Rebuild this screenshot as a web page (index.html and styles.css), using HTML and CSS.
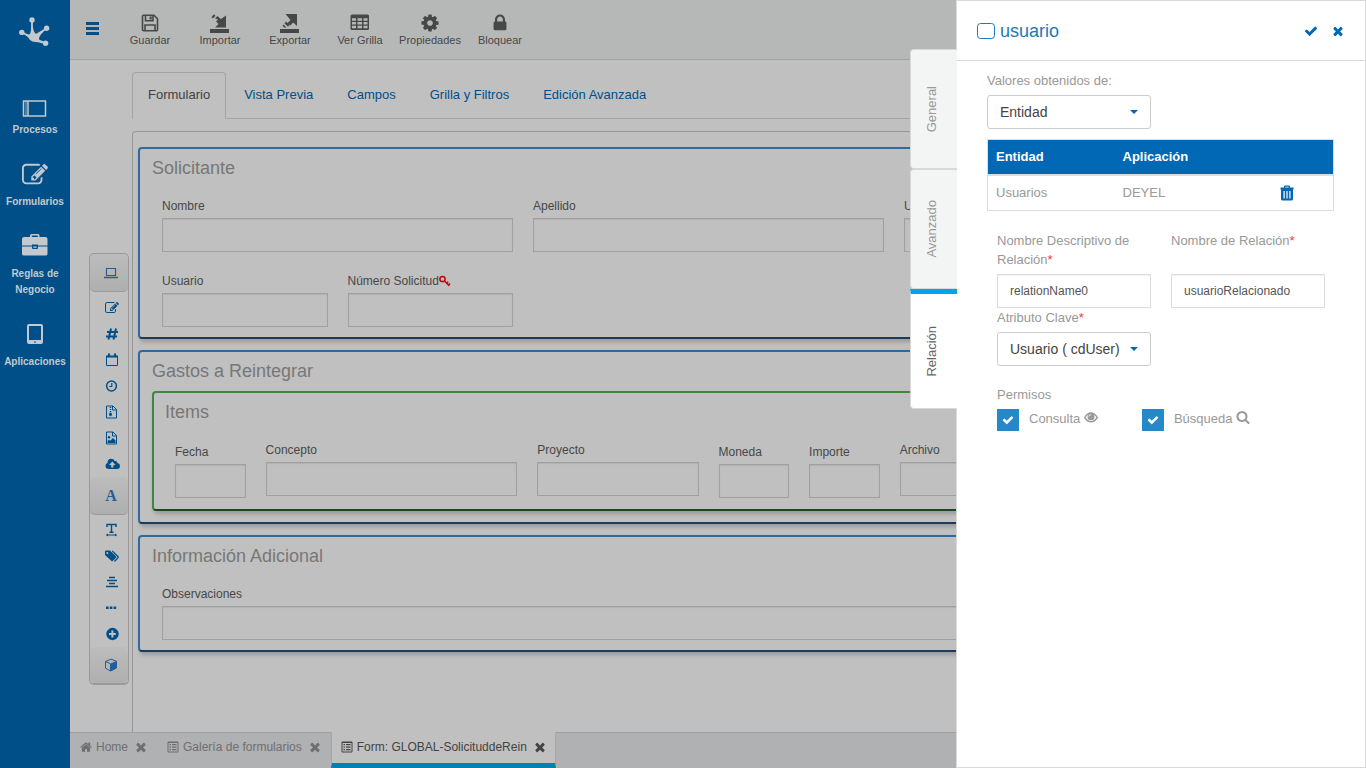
FILE: index.html
```html
<!DOCTYPE html>
<html lang="es">
<head>
<meta charset="utf-8">
<meta name="viewport" content="width=device-width, initial-scale=1">
<title>Form: GLOBAL-SolicituddeRein</title>
<link rel="stylesheet" href="styles.css">
</head>
<body>
<svg class="symbols" aria-hidden="true">
  <symbol id="i-times" viewBox="0 0 1792 1792"><path d="M1490 1322q0 40-28 68l-136 136q-28 28-68 28t-68-28l-294-294-294 294q-28 28-68 28t-68-28l-136-136q-28-28-28-68t28-68l294-294-294-294q-28-28-28-68t28-68l136-136q28-28 68-28t68 28l294 294 294-294q28-28 68-28t68 28l136 136q28 28 28 68t-28 68l-294 294 294 294q28 28 28 68z"/></symbol>
  <symbol id="i-check" viewBox="0 0 1792 1792"><path d="M1671 566q0 40-28 68l-724 724-136 136q-28 28-68 28t-68-28l-136-136-362-362q-28-28-28-68t28-68l136-136q28-28 68-28t68 28l294 295 656-657q28-28 68-28t68 28l136 136q28 28 28 68z"/></symbol>
  <symbol id="i-edit" viewBox="0 0 1792 1792"><path d="M888 1184l116-116-152-152-116 116v56h96v96h56zm440-720q-16-16-33 1l-350 350q-17 17-1 33t33-1l350-350q17-17 1-33zm80 594v190q0 119-84.5 203.5t-203.5 84.5h-832q-119 0-203.5-84.5t-84.5-203.5v-832q0-119 84.5-203.5t203.5-84.5h832q63 0 117 25 15 7 18 23 3 17-9 29l-49 49q-14 14-32 8-23-6-45-6h-832q-66 0-113 47t-47 113v832q0 66 47 113t113 47h832q66 0 113-47t47-113v-126q0-13 9-22l64-64q15-15 35-7t20 29zm-96-738l288 288-672 672h-288v-288zm444 132l-92 92-288-288 92-92q28-28 68-28t68 28l152 152q28 28 28 68t-28 68z"/></symbol>
  <symbol id="i-list" viewBox="0 0 12 12"><path fill-rule="evenodd" d="M1.500.5h9a1 1 0 0 1 1 1v9a1 1 0 0 1-1 1h-9a1 1 0 0 1-1-1v-9a1 1 0 0 1 1-1zM1.500 2v8.500h9V2z"/><path d="M2.500 3H4v1.200H2.500zM5 3h4.500v1.200H5zM2.500 5.500H4v1.200H2.500zM5 5.500h4.500v1.200H5zM2.500 8H4v1.200H2.500zM5 8h4.500v1.200H5z"/></symbol>
</svg>

<div class="app">
  <nav class="sidebar" aria-label="Principal">
    <a class="logo" href="#" aria-label="Inicio">
      <svg width="34" height="34" viewBox="0 0 34 34"><g stroke="currentColor" stroke-linecap="round" fill="none" stroke-width="1.800"><path d="M14 6v11M4 18.500l8 4M18 21l10.500-6.500M17 25l10.500 4"/></g><g fill="currentColor"><circle cx="14" cy="6" r="2.700"/><circle cx="3.800" cy="18.400" r="2.700"/><circle cx="28.600" cy="14.200" r="2.700"/><circle cx="27.600" cy="29.300" r="2.700"/><path d="M13.200 12h1.600q.2 5 3.200 8 3 0 7-3.800l.8 1.200q-5 4.600-4.800 7.800 1 1.800 4 2.900l-.5 1.400q-3-1.500-6.500-1.500-3.500.3-6-2-2-3.500-5-5.300l.6-1.200q3 1.500 4.400.5 1.200-2.500 1.200-8z"/></g></svg>
    </a>
    <ul class="sidebar-menu">
      <li><a href="#"><svg width="30" height="30" viewBox="0 1 30 30" fill="none" stroke="currentColor"><path d="M3.500 14h22v15h-22zM8 14v15" stroke-width="1.500"/><path d="M6 14v15" stroke-width=".8"/></svg>Procesos</a></li>
      <li><a href="#"><svg width="26" height="30"><use href="#i-edit"/></svg>Formularios</a></li>
      <li><a href="#"><svg width="30" height="30" viewBox="0 2 30 30" fill="currentColor"><path fill-rule="evenodd" d="M10 7V5.500Q10 4 11.500 4h6.500q1.500 0 1.500 1.500V7h6q2 0 2 2v6.500H18v-1h-6v1H2V9q0-2 2-2zm1.800 0h6V5.500h-6zM2 16.500h10V18q0 1 1 1h4q1 0 1-1v-1.500h9.500V24q0 1.500-2 1.500H4q-2 0-2-1.500zm11.300 0h3.400v1.300h-3.400z"/></svg>Reglas de<br>Negocio</a></li>
      <li><a href="#"><svg width="30" height="30" viewBox="0 1 30 30" fill="currentColor"><path fill-rule="evenodd" d="M9 5h12q2 0 2 2v16q0 2-2 2H9q-2 0-2-2V7q0-2 2-2zm0 2v14h12V7zm5.200 15.500v1.200h1.600v-1.200z"/></svg>Aplicaciones</a></li>
    </ul>
  </nav>

  <div class="main">
    <header class="toolbar">
      <button class="burger" type="button" aria-label="Menú"><svg width="14" height="14" viewBox="0 0 14 14" fill="currentColor"><path d="M0 0h13v3H0zM0 5h13v3H0zM0 10h13v3H0z"/></svg></button>
      <button type="button"><svg width="20" height="20" viewBox="0 0 20 20" fill="none" stroke="currentColor" stroke-width="1.600"><path d="M2.500 3.300q0-1 1-1H14l3.500 3.500v11q0 1-1 1h-13q-1 0-1-1z"/><path d="M5 17.500V12h10v5.500M5.500 2.500v5.200h7.500V2.500"/><path d="M9.500 3.500h2.200v3H9.500z" fill="currentColor" stroke="none"/></svg>Guardar</button>
      <button type="button"><svg width="20" height="20" viewBox="0 0 20 20" fill="currentColor"><path d="M0 16h19v5H0zM1.500 4L4 1.200l1.500 1.500L3 5.500zM5 5.500L7.500 3 16 11V2.500V14.500H5L8.500 11 6 8.500 8 6.500z"/><path d="M9.500 7L16 2.500v9z"/></svg>Importar</button>
      <button type="button"><svg width="20" height="20" viewBox="0 0 20 20" fill="currentColor"><path d="M0 16h19v5H0zM5.500 1H17v12l-3.800-3.500-3 3L7.500 10l3-3zM6 8.500l3.500 3.500-1.500 1.700-3.500-3.200zM3.500 11.500l2.500 2.500-1 1-2.500-2z"/></svg>Exportar</button>
      <button type="button"><svg width="20" height="20" viewBox="0 0 20 20"><path fill="currentColor" fill-rule="evenodd" d="M2 1.500h15.500Q19 1.500 19 3v12.500q0 1.500-1.500 1.500H2Q.5 17 .5 15.500V3Q.5 1.500 2 1.500zM2 5.200v2.500h4V5.200zm5.500 0v2.500H12V5.200zm6 0v2.500h4V5.200zM2 9v2.500h4V9zm5.500 0v2.500H12V9zm6 0v2.500h4V9zM2 12.800v2.500h4v-2.500zm5.500 0v2.500H12v-2.500zm6 0v2.500h4v-2.500z"/></svg>Ver Grilla</button>
      <button type="button"><svg width="20" height="20" viewBox="0 0 1792 1792" fill="currentColor"><path d="M1152 896q0-106-75-181t-181-75-181 75-75 181 75 181 181 75 181-75 75-181zm512-109v222q0 12-8 23t-20 13l-185 28q-19 54-39 91 35 50 107 138 10 12 10 25t-9 23q-27 37-99 108t-94 71q-12 0-26-9l-138-108q-44 23-91 38-16 136-29 186-7 28-36 28h-222q-14 0-24.500-8.500t-11.500-21.500l-28-184q-49-16-90-37l-141 107q-10 9-25 9-14 0-25-11-126-114-165-168-7-10-7-23 0-12 8-23 15-21 51-66.500t54-70.500q-27-50-41-99l-183-27q-13-2-21-12.500t-8-23.500v-222q0-12 8-23t19-13l186-28q14-46 39-92-40-57-107-138-10-12-10-24 0-10 9-23 26-36 98.500-107.500t94.500-71.500q13 0 26 10l138 107q44-23 91-38 16-136 29-186 7-28 36-28h222q14 0 24.500 8.500t11.500 21.500l28 184q49 16 90 37l142-107q9-9 24-9 13 0 25 10 129 119 165 170 7 8 7 22 0 12-8 23-15 21-51 66.500t-54 70.500q26 50 41 98l183 28q13 2 21 12.500t8 23.500z"/></svg>Propiedades</button>
      <button type="button"><svg width="20" height="20" viewBox="0 0 1792 1792" fill="currentColor"><path d="M640 768h512v-192q0-106-75-181t-181-75-181 75-75 181v192zm832 96v576q0 40-28 68t-68 28h-960q-40 0-68-28t-28-68v-576q0-40 28-68t68-28h32v-192q0-184 132-316t316-132 316 132 132 316v192h32q40 0 68 28t28 68z"/></svg>Bloquear</button>
    </header>

    <div class="content">
      <aside class="rail" aria-label="Controles">
        <div class="rail-box">
          <button class="rail-head" type="button" aria-label="Controles"><svg width="16" height="12" viewBox="0 0 16 12" fill="none" stroke="currentColor"><path d="M3.500 1.500h9v7h-9z" stroke-width="1.200"/><path d="M1 10.500h14" stroke-width="1.400"/></svg></button>
          <ul class="rail-list">
            <li><button type="button" aria-label="Texto"><svg width="14" height="14"><use href="#i-edit"/></svg></button></li>
            <li><button type="button" aria-label="Número"><svg width="14" height="14" viewBox="0 0 14 14" fill="none" stroke="currentColor" stroke-width="2"><path d="M6 1.500L3.500 12.500M11 1.500L8.500 12.500M2 5h11M1 9.500h11"/></svg></button></li>
            <li><button type="button" aria-label="Fecha"><svg width="14" height="14" viewBox="0 0 14 14"><path d="M1.500 3.500h11v9h-11z" fill="none" stroke="currentColor"/><path d="M1 2.500h12v2H1zM3 .5h2v3H3zM9 .5h2v3H9z" fill="currentColor"/></svg></button></li>
            <li><button type="button" aria-label="Hora"><svg width="14" height="14" viewBox="0 0 14 14" fill="none" stroke="currentColor"><circle cx="6.500" cy="7" r="4.900" stroke-width="1.500"/><path d="M6.800 4v3.500H4.200" stroke-width="1.200"/></svg></button></li>
            <li><button type="button" aria-label="Archivo"><svg width="14" height="14" viewBox="0 0 14 14" fill="none" stroke="currentColor"><path d="M1.500 1h6.500l3.500 3.500v8.500h-10zM7.500 1v4h4"/><path d="M5.500 2v6" stroke-width="1.400" stroke-dasharray="1 1"/><ellipse cx="5.500" cy="9.300" rx="1.400" ry="1.900" fill="currentColor" stroke="none"/></svg></button></li>
            <li><button type="button" aria-label="Imagen"><svg width="14" height="14" viewBox="0 0 14 14" fill="none" stroke="currentColor"><path d="M1.500 1h6.500l3.500 3.500v8.500h-10zM7.500 1v4h4"/><path d="M2.500 12V10L4 8.800l1.200 1L8 7l2.500 2.500V12z" fill="currentColor" stroke="none"/><circle cx="4" cy="6.300" r="1.200" fill="currentColor" stroke="none"/></svg></button></li>
            <li><button type="button" aria-label="Subir"><svg width="15" height="14" viewBox="0 0 15 14"><path fill="currentColor" fill-rule="evenodd" d="M4 12q-3.500 0-3.500-3Q.5 6.700 2.500 6 2.300 2 6.200 1.800q2.500 0 3.600 2.300 2.200-.5 2.700 2Q15 6.700 15 9q0 3-3 3zM7.300 4.500L4 8h2.200v2.500h2.200V8h2.200z"/></svg></button></li>
          </ul>
          <button class="rail-head rail-letter" type="button">A</button>
          <ul class="rail-list">
            <li><button type="button" aria-label="Rótulo"><svg width="14" height="14" viewBox="0 0 14 14" fill="none" stroke="currentColor"><path d="M2 4V1.500h9V4M6.500 1.500v7.500M4.500 9.300h4" stroke-width="1.400"/><path d="M1.500 12h10" stroke-width="1.200"/><path d="M3 10.500L1 12l2 1.500zM10 10.500l2 1.500-2 1.500z" fill="currentColor" stroke="none"/></svg></button></li>
            <li><button type="button" aria-label="Etiquetas"><svg width="16" height="14" viewBox="0 0 16 14"><path fill="currentColor" fill-rule="evenodd" d="M1 2.500Q1 1.500 2 1.500h4L12 7.500q.6.600 0 1.200L8.700 12q-.6.600-1.200 0L1 6zM3.300 3a1 1 0 1 0 .1 2 1 1 0 0 0-.1-2z"/><path d="M8.300 2l5.800 5.800q.4.400 0 .8L10.500 12.500" fill="none" stroke="currentColor" stroke-width="1.300"/></svg></button></li>
            <li><button type="button" aria-label="Separador"><svg width="14" height="14" viewBox="0 0 14 14" fill="none" stroke="currentColor" stroke-width="1.500"><path d="M4 2.500h6M2 5.500h10M4 8.500h6M1 11.500h12"/></svg></button></li>
            <li><button type="button" aria-label="Espacio"><svg width="14" height="14" viewBox="0 0 14 14" fill="currentColor"><path d="M1 5.500h2.600V8H1zM4.800 5.500h2.600V8H4.800zM8.600 5.500h2.600V8H8.600z"/></svg></button></li>
            <li><button type="button" aria-label="Agregar"><svg width="14" height="14" viewBox="0 0 14 14" fill="currentColor"><path fill-rule="evenodd" d="M7.500.8a6.200 6.200 0 1 0 .01 0zM6.400 3.500h2v2.400h2.400v2H8.400v2.600h-2V7.900H4v-2h2.400z"/></svg></button></li>
          </ul>
          <button class="rail-head" type="button" aria-label="Objetos"><svg width="16" height="14" viewBox="0 0 14 14" fill="none" stroke="currentColor"><path d="M1.500 3.500L7 1.200l5.500 2v6.300L6.500 13l-5-2.800z"/><path d="M6.500 6l6-2.500v6.500l-6 3z" fill="currentColor"/><path d="M1.500 3.500l5 2.300"/></svg></button>
        </div>
      </aside>

      <main class="work">
        <nav class="tabs" aria-label="Vistas">
          <a class="tab tab--active" href="#">Formulario</a>
          <a class="tab" href="#">Vista Previa</a>
          <a class="tab" href="#">Campos</a>
          <a class="tab" href="#">Grilla y Filtros</a>
          <a class="tab" href="#">Edición Avanzada</a>
        </nav>

        <form class="canvas">
          <section class="group">
            <h2>Solicitante</h2>
            <div class="fields fields--six">
              <div class="field span-2"><label for="nombre">Nombre</label><input id="nombre" type="text"></div>
              <div class="field span-2"><label for="apellido">Apellido</label><input id="apellido" type="text"></div>
              <div class="field span-2"><label for="unidad">Unidad</label><input id="unidad" type="text"></div>
              <div class="field"><label for="usuario">Usuario</label><input id="usuario" type="text"></div>
              <div class="field"><label for="numero">Número Solicitud<svg class="key" width="12" height="12" viewBox="0 0 12 12" fill="none" stroke="currentColor" stroke-width="1.500"><circle cx="3.500" cy="4" r="2.600"/><path d="M5.500 6l5 5M7.700 8.200l1.500-1.500M9.500 10l1.500-1.500"/></svg></label><input id="numero" type="text"></div>
            </div>
          </section>

          <section class="group group--outer">
            <h2>Gastos a Reintegrar</h2>
            <section class="group group--items">
              <h2>Items</h2>
              <div class="fields fields--twelve">
                <div class="field field--short"><label for="fecha">Fecha</label><input id="fecha" type="text"></div>
                <div class="field span-3"><label for="concepto">Concepto</label><input id="concepto" type="text"></div>
                <div class="field span-2"><label for="proyecto">Proyecto</label><input id="proyecto" type="text"></div>
                <div class="field field--short"><label for="moneda">Moneda</label><input id="moneda" type="text"></div>
                <div class="field field--short"><label for="importe">Importe</label><input id="importe" type="text"></div>
                <div class="field span-4"><label for="archivo">Archivo</label><input id="archivo" type="text"></div>
              </div>
            </section>
          </section>

          <section class="group">
            <h2>Información Adicional</h2>
            <div class="fields">
              <div class="field"><label for="obs">Observaciones</label><input id="obs" type="text"></div>
            </div>
          </section>
        </form>
      </main>
    </div>

    <footer class="taskbar">
      <div class="task"><a href="#"><svg width="12" height="12" viewBox="60 190 1670 1400" fill="currentColor"><path d="M1472 992v480q0 26-19 45t-45 19h-384v-384h-256v384h-384q-26 0-45-19t-19-45v-480l576-477 576 477zm223-69l-62 74q-8 9-21 11h-3q-13 0-21-7l-692-577-692 577q-12 8-24 7-13-2-21-11l-62-74q-8-10-7-23.500t11-21.500l719-599q32-26 76-26t76 26l244 204v-195q0-14 9-23t23-9h192q14 0 23 9t9 23v408l219 182q10 8 11 21.500t-7 23.500z"/></svg>Home</a><button type="button" aria-label="Cerrar Home"><svg width="14" height="14"><use href="#i-times"/></svg></button></div>
      <div class="task"><a href="#"><svg width="12" height="12"><use href="#i-list"/></svg>Galería de formularios</a><button type="button" aria-label="Cerrar Galería de formularios"><svg width="14" height="14"><use href="#i-times"/></svg></button></div>
      <div class="task task--active"><a href="#"><svg width="12" height="12"><use href="#i-list"/></svg>Form: GLOBAL-SolicituddeRein</a><button type="button" aria-label="Cerrar Form"><svg width="14" height="14"><use href="#i-times"/></svg></button></div>
    </footer>
  </div>

  <aside class="drawer" aria-label="Propiedades de usuario">
    <nav class="side-tabs" aria-label="Secciones">
      <a href="#"><span>General</span></a>
      <a href="#"><span>Avanzado</span></a>
      <a class="is-active" href="#"><span>Relación</span></a>
    </nav>
    <div class="drawer-head">
      <h1><svg width="18" height="16" viewBox="0 0 18 16" fill="none" stroke="currentColor"><rect x=".5" y=".5" width="17" height="15" rx="3"/></svg>usuario</h1>
      <button type="button" aria-label="Aceptar"><svg width="14" height="14"><use href="#i-check"/></svg></button>
      <button type="button" aria-label="Cerrar"><svg width="14" height="14"><use href="#i-times"/></svg></button>
    </div>
    <div class="drawer-body">
      <div class="source">
        <label for="origen">Valores obtenidos de:</label>
        <span class="select"><select id="origen"><option>Entidad</option></select></span>
      </div>
      <table class="entities">
        <thead><tr><th scope="col">Entidad</th><th scope="col">Aplicación</th><th scope="col"></th></tr></thead>
        <tbody><tr><td>Usuarios</td><td>DEYEL</td><td class="actions"><button type="button" aria-label="Eliminar"><svg width="14" height="16" viewBox="0 0 14 16"><path fill="currentColor" fill-rule="evenodd" d="M4 2.500V1.500Q4 .5 5 .5h4q1 0 1 1v1h3.500v2H13V14q0 1.500-1.500 1.500h-9Q1 15.500 1 14V4.500H.5v-2zm1.300 0h3.400v-.8H5.300zM3.500 6v7.500h1.200V6zm2.900 0v7.500h1.200V6zm2.900 0v7.500h1.200V6z"/></svg></button></td></tr></tbody>
      </table>
      <div class="relation">
        <div class="prop"><label for="desc">Nombre Descriptivo de Relación<b>*</b></label><input id="desc" type="text" value="relationName0"></div>
        <div class="prop"><label for="rel">Nombre de Relación<b>*</b></label><input id="rel" type="text" value="usuarioRelacionado"></div>
        <div class="prop"><label for="clave">Atributo Clave<b>*</b></label><span class="select"><select id="clave"><option>Usuario ( cdUser)</option></select></span></div>
      </div>
      <fieldset class="permissions">
        <legend>Permisos</legend>
        <div class="checks">
          <label><span class="check"><input type="checkbox" checked><svg width="12" height="12"><use href="#i-check"/></svg></span><span>Consulta <svg class="inline" width="14" height="14" viewBox="0 0 14 14"><path fill="none" stroke="currentColor" stroke-width="1.400" d="M.7 7.500Q3.500 3 7 3t6.300 4.500Q10.500 11.800 7 11.800T.7 7.500z"/><circle cx="7" cy="6.800" r="3.500" fill="currentColor"/><path d="M5 6.500Q5 4.800 7 4.800" fill="none" stroke="#fff" stroke-width=".8"/></svg></span></label>
          <label><span class="check"><input type="checkbox" checked><svg width="12" height="12"><use href="#i-check"/></svg></span><span>Búsqueda <svg class="inline" width="14" height="14" viewBox="0 0 1792 1792" fill="currentColor"><path d="M1216 832q0-185-131.500-316.500t-316.500-131.500-316.500 131.500-131.500 316.500 131.500 316.500 316.500 131.500 316.500-131.500 131.500-316.500zm512 832q0 52-38 90t-90 38q-54 0-90-38l-343-342q-179 124-399 124-143 0-273.500-55.500t-225-150-150-225-55.500-273.500 55.500-273.500 150-225 225-150 273.500-55.500 273.500 55.500 225 150 150 225 55.500 273.500q0 220-124 399l343 343q37 37 37 90z"/></svg></span></label>
        </div>
      </fieldset>
    </div>
  </aside>
</div>
</body>
</html>
```

FILE: styles.css
```css
*, *::before, *::after { box-sizing: border-box; }

body {
  margin: 0;
  background: #c0c0c0;
  color: #474747;
  font: 12px/18px "Liberation Sans", Arial, sans-serif;
}

a { color: inherit; text-decoration: none; }
ul { margin: 0; padding: 0; list-style: none; }
h1, h2 { margin: 0; font-weight: 400; }
svg { flex: none; }
use { fill: currentColor; }

button {
  padding: 0;
  border: 0;
  background: none;
  color: inherit;
  font: inherit;
}

.symbols { display: none; }

.app {
  position: relative;
  display: flex;
  height: 100vh;
  overflow: hidden;
}

/* Left navigation */
.sidebar {
  flex: none;
  width: 70px;
  background: #004f89;
  color: #c3c9cc;
}

.logo {
  display: flex;
  justify-content: center;
  padding: 14px 0 40px;
}

.sidebar-menu {
  display: flex;
  flex-direction: column;
  gap: 22px;
}

.sidebar-menu a {
  display: flex;
  flex-direction: column;
  align-items: center;
  gap: 4px;
  font-size: 10px;
  font-weight: 700;
  line-height: 16px;
  text-align: center;
}

.main {
  display: flex;
  flex: 1;
  flex-direction: column;
  min-width: 0;
}

/* Top toolbar */
.toolbar {
  display: flex;
  flex: none;
  height: 60px;
  padding-left: 16px;
  border-bottom: 1px solid #a2a4a3;
  background: #b6b8b7;
}

.toolbar button {
  display: flex;
  flex-direction: column;
  align-items: center;
  width: 70px;
  padding-top: 13px;
  font-size: 11px;
  line-height: 14px;
}

.toolbar .burger {
  width: 29px;
  padding-top: 22px;
  align-items: flex-start;
  color: #004f89;
}

.content {
  display: flex;
  flex: 1;
  gap: 3px;
  min-height: 0;
  padding-left: 19px;
}

/* Control palette */
.rail { flex: none; width: 40px; padding-top: 193px; }

.rail-box {
  overflow: hidden;
  border: 1px solid #999;
  border-bottom-width: 2px;
  border-radius: 5px;
  color: #004f89;
}

.rail-head {
  display: flex;
  align-items: center;
  justify-content: center;
  width: 100%;
  height: 38px;
  padding-left: 4px;
  border-bottom: 1px solid #999;
  border-radius: 5px;
  background: linear-gradient(#bcbcbc, #afafaf);
  color: #235f97;
}

.rail-head:last-child { height: 36px; border-bottom: 0; }

.rail-letter { font: 700 16px/18px "Liberation Serif", serif; }
.rail-list { padding: 3px 0 0 6px; }
.rail-letter + .rail-list { padding-top: 2px; }

.rail-list button {
  display: flex;
  align-items: center;
  justify-content: center;
  width: 100%;
  height: 26px;
}

/* Form designer */
.work {
  display: flex;
  flex: 1;
  flex-direction: column;
  gap: 12px;
  min-width: 0;
  padding: 12px 81px 0 0;
}

.tabs {
  display: flex;
  flex: none;
  gap: 2px;
  height: 47px;
  border-bottom: 1px solid #a4a4a4;
}

.tab {
  height: 47px;
  padding: 13px 15px;
  border: 1px solid transparent;
  color: #004f89;
  font-size: 13px;
}

.tab--active {
  border-color: #a4a4a4;
  border-bottom-color: #c0c0c0;
  border-radius: 4px 4px 0 0;
  background: #c0c0c0;
  color: #414141;
}

.canvas {
  display: flex;
  flex: 1;
  flex-direction: column;
  gap: 11px;
  padding: 15px 5px;
  border: 1px solid #969696;
  border-bottom: 0;
  border-radius: 4px 4px 0 0;
}

.group {
  padding: 9px 12px 10px;
  border: 2px solid #2f6a9e;
  border-bottom-color: #1b3c59;
  border-radius: 4px;
  background: #c0c0c0;
  box-shadow: 2px 3px 4px rgba(0, 0, 0, .2);
}

.group--outer { padding-bottom: 11px; }

.group--items {
  margin-top: 10px;
  padding: 9px 11px 11px;
  border-color: #3b883e;
  border-bottom-color: #1f4821;
}

.group h2 {
  color: #777;
  font-size: 18px;
  line-height: 20px;
}

.fields {
  display: grid;
  gap: 20px;
  margin-top: 19px;
  padding: 0 10px;
}

.fields--six { grid-template-columns: repeat(6, minmax(0, 1fr)); }
.fields--twelve { grid-template-columns: repeat(12, minmax(0, 1fr)); }
.span-2 { grid-column: span 2; }
.span-3 { grid-column: span 3; }
.span-4 { grid-column: span 4; }

.field {
  display: flex;
  flex-direction: column;
  gap: 3px;
}

.field--short { padding-top: 2px; }
.field label { white-space: nowrap; }

.field input {
  width: 100%;
  height: 34px;
  border: 1px solid #a0a0a0;
  border-radius: 0;
  background: transparent;
  box-shadow: inset 0 1px 1px rgba(0, 0, 0, .08);
}

.key { color: #c4000c; vertical-align: -2px; }

/* Open documents */
.taskbar {
  display: flex;
  flex: none;
  height: 36px;
  background: #afb1b3;
  color: #6f6f6f;
}

.task {
  display: flex;
  gap: 6px;
  padding: 5px 9px 0 10px;
  border-top: 1px solid #9d9fa1;
}

.taskbar::after { content: ""; flex: 1; border-top: 1px solid #9d9fa1; }

.task a,
.task button {
  display: flex;
  align-items: center;
  gap: 4px;
  height: 18px;
}

.task.task--active {
  padding-right: 8px;
  padding-left: 9px;
  border: 1px solid #a4a6a8;
  border-top-color: #c0c0c0;
  border-bottom: 5px solid #0080b5;
  background: #c0c0c0;
  color: #434343;
}

/* Properties drawer, over the designer */
.drawer {
  position: absolute;
  top: 0;
  right: 0;
  bottom: 0;
  width: 410px;
  border: 1px solid #d9d9d9;
  background: #fff;
  color: #999;
  font-size: 13px;
}

.side-tabs {
  position: absolute;
  top: 48px;
  right: 100%;
  display: flex;
  flex-direction: column;
  width: 47px;
}

.side-tabs a {
  display: flex;
  align-items: center;
  justify-content: center;
  height: 120px;
  padding-right: 4px;
  border: 1px solid #d9d9d9;
  border-right: 0;
  border-radius: 4px 0 0 4px;
  background: #f3f5f4;
}

.side-tabs a.is-active {
  border-top: 5px solid #00a4e8;
  border-radius: 0 0 0 4px;
  background: #fff;
  color: #666;
}

.side-tabs span {
  writing-mode: vertical-rl;
  transform: rotate(180deg);
}

.drawer-head {
  display: flex;
  align-items: center;
  gap: 13px;
  height: 60px;
  padding: 1px 20px 0;
  border-bottom: 1px solid #ddd;
  color: #0068b5;
}

.drawer-head button { display: flex; }

.drawer-head h1 {
  display: flex;
  flex: 1;
  align-items: center;
  gap: 5px;
  color: #1d78bd;
  font-size: 18px;
  line-height: 24px;
}

.drawer-body { padding: 10px 31px 0 30px; }

.source {
  display: flex;
  flex-direction: column;
  gap: 5px;
  width: 164px;
  line-height: 19px;
}

.select { position: relative; display: block; }

/* Caret of the drop-down */
.select::after {
  content: "";
  position: absolute;
  top: 15px;
  right: 13px;
  border: 4px solid transparent;
  border-top-color: #0068b5;
  border-bottom: 0;
  pointer-events: none;
}

select {
  width: 100%;
  height: 34px;
  padding: 0 8px 0 12px;
  border: 1px solid #ccc;
  border-radius: 3px;
  background: #fff;
  color: #444;
  font: 14px "Liberation Sans", Arial, sans-serif;
  appearance: none;
}

.entities {
  width: 100%;
  margin-top: 10px;
  border: 1px solid #ddd;
  border-collapse: collapse;
  table-layout: fixed;
  line-height: 18px;
}

.entities th {
  padding: 8px;
  border-bottom: 2px solid #ddd;
  background: #0068b5;
  color: #fff;
  text-align: left;
}

.entities th:first-child { width: 127px; }
.entities td { padding: 8px; }
.entities .actions { padding: 0 39px 0 0; color: #0068b5; }
.entities button { display: flex; margin-left: auto; }

.relation {
  display: grid;
  grid-template-columns: repeat(2, minmax(0, 1fr));
  column-gap: 20px;
  padding: 20px 9px 0 10px;
  line-height: 19px;
}

.prop {
  display: flex;
  flex-direction: column;
  justify-content: space-between;
  gap: 5px;
}

.prop b { color: #f33; font-weight: 400; }

.prop input {
  width: 100%;
  height: 34px;
  padding: 0 12px;
  border: 1px solid #ddd;
  border-radius: 0;
  box-shadow: inset 0 1px 1px rgba(0, 0, 0, .06);
  color: #555;
  font: 12px "Liberation Sans", Arial, sans-serif;
}

.permissions {
  margin: 19px 0 0;
  padding: 0 10px;
  border: 0;
}

.permissions legend { padding: 0; line-height: 19px; }
.checks { display: flex; gap: 44px; padding-top: 5px; }

.checks label {
  display: flex;
  gap: 10px;
  line-height: 19px;
}

.check {
  position: relative;
  width: 22px;
  height: 22px;
  color: #fff;
}

.check input {
  width: 22px;
  height: 22px;
  margin: 0;
  background: #2588c8;
  appearance: none;
}

.check svg { position: absolute; inset: 5px; }
.inline { vertical-align: -1px; }
```
